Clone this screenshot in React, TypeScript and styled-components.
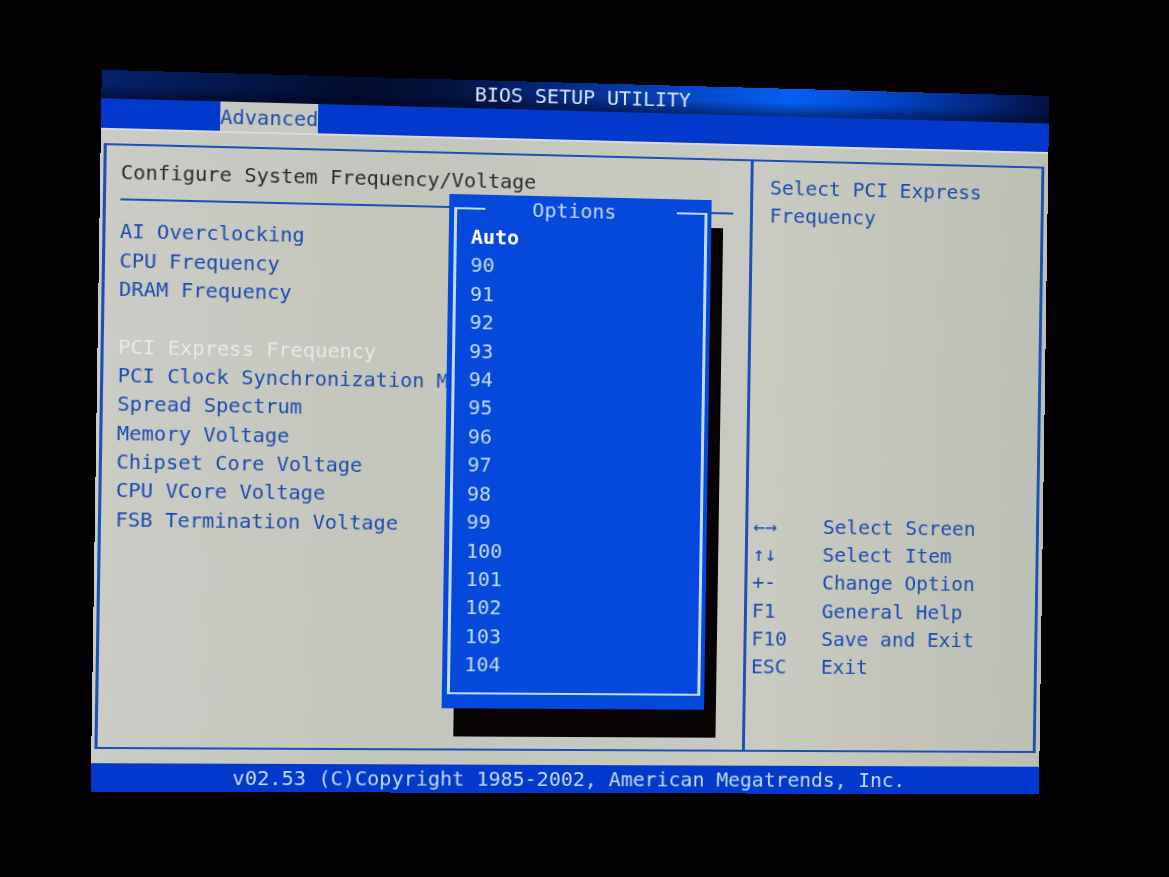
import React, { useState } from "react";
import styled, { createGlobalStyle } from "styled-components";

const ink = "#1c4cae";
const line = "#1d50b4";
const bar = "#0239cd";
const paper = "#c7c8c0";
const pale = "#c3dcf6";

const GlobalStyle = createGlobalStyle`
  * { box-sizing: border-box; }
  body {
    margin: 0;
    background: #030103;
    font-family: "DejaVu Sans Mono", "Liberation Mono", monospace;
    font-size: 20px;
    line-height: 28px;
  }
  button { font: inherit; color: inherit; background: none; border: 0; padding: 0; text-align: left; cursor: pointer; }
  h1, h2, p, ul, dl, dd, dt { margin: 0; padding: 0; font: inherit; list-style: none; }
`;

const Room = styled.div`
  min-height: 100vh;
  padding: 83px 116px 84px 103px;
  overflow: hidden;
`;

/* The monitor stands slightly turned away from the viewer. */
const Screen = styled.div`
  min-height: 710px;
  display: grid;
  grid-template-rows: 1fr 1fr 22fr 1fr;
  transform: perspective(2000px) rotateY(4deg) rotate(0.87deg);
`;

const TitleBar = styled.header`
  color: #d9e6fb;
  text-align: center;
  background:
    linear-gradient(180deg, rgba(0, 0, 0, 0) 50%, rgba(0, 2, 20, 0.5) 100%),
    linear-gradient(90deg, #04226c 0%, #031748 14%, #020d30 26%, #03133f 36%, #06267c 46%, #0545c0 60%, #0560f2 72%, #0346cc 82%, #04267e 93%, #04123c 100%);
`;

const MenuBar = styled.nav`
  display: flex;
  padding-left: 116px;
  background: ${bar};
`;

const MenuTab = styled.button`
  color: ${ink};
  background: ${paper};
`;

const Desk = styled.main`
  position: relative;
  display: grid;
  padding: 13px 4px 14px 3px;
  background: linear-gradient(90deg, #cbccc5 0%, #c4c6bd 30%, #c9cac1 70%, #bcbfb4 100%);
  border-top: 2px solid #d9dade;
`;

const Frame = styled.div`
  display: grid;
  grid-template-columns: 643fr 300fr;
  border: solid ${line};
  border-width: 2px 3px;
`;

const Settings = styled.section`
  padding: 12px 17px 0 14px;
  color: ${ink};
`;

const Heading = styled.h1`
  height: 42px;
  color: #2b2b2e;
  border-bottom: 2px solid ${line};
`;

const SettingList = styled.ul`
  display: grid;
  grid-template-rows: repeat(11, 1fr);
  height: 312px;
  margin-top: 16px;
`;

const SettingItem = styled.li<{ $gap?: boolean }>`
  grid-row: ${(p) => (p.$gap ? "span 2" : "auto")};
  align-self: end;
`;

const SettingButton = styled.button<{ $active?: boolean }>`
  display: block;
  white-space: nowrap;
  color: ${(p) => (p.$active ? "#e9e8e2" : "inherit")};
`;

const Help = styled.aside`
  display: flex;
  flex-direction: column;
  justify-content: space-between;
  padding: 12px 0 69px;
  color: ${ink};
  border-left: 3px solid ${line};
`;

const HelpText = styled.p`
  padding-left: 17px;
`;

const KeyList = styled.dl`
  display: grid;
  grid-template-columns: 71px 1fr;
  grid-auto-rows: 1fr;
  height: 170px;
  padding-left: 5px;
`;

const Popup = styled.section`
  position: absolute;
  left: 343px;
  top: 55px;
  width: 263px;
  height: 512px;
  padding: 0 4px 14px 5px;
  background: #0449dc;
  box-shadow: 12px 28px 0 #060302;
`;

const OptionFrame = styled.fieldset`
  height: 498px;
  min-width: 0;
  margin: 0;
  padding: 0 0 13px;
  border: solid ${pale};
  border-width: 2px 3px;
`;

const OptionTitle = styled.legend`
  width: 192px;
  margin: 0 auto;
  padding: 0 14px 0 0;
  text-align: center;
  color: ${pale};
`;

const OptionList = styled.ul`
  display: grid;
  grid-auto-rows: 1fr;
  height: 455px;
  margin-left: 14px;
`;

const OptionButton = styled.button<{ $chosen: boolean }>`
  display: block;
  width: 100%;
  color: ${(p) => (p.$chosen ? "#ffffff" : pale)};
  font-weight: ${(p) => (p.$chosen ? 700 : 400)};
`;

const Footer = styled.footer`
  color: ${pale};
  text-align: center;
  white-space: nowrap;
  background: ${bar};
`;

const settings = [
  "AI Overclocking",
  "CPU Frequency",
  "DRAM Frequency",
  "PCI Express Frequency",
  "PCI Clock Synchronization M",
  "Spread Spectrum",
  "Memory Voltage",
  "Chipset Core Voltage",
  "CPU VCore Voltage",
  "FSB Termination Voltage",
];

const keys = [
  ["←→", "Select Screen"],
  ["↑↓", "Select Item"],
  ["+-", "Change Option"],
  ["F1", "General Help"],
  ["F10", "Save and Exit"],
  ["ESC", "Exit"],
];

const options = ["Auto", ...Array.from({ length: 15 }, (_, i) => String(90 + i))];

export default function App() {
  const [chosen, setChosen] = useState("Auto");
  return (
    <Room>
      <GlobalStyle />
      <Screen>
        <TitleBar>BIOS SETUP UTILITY</TitleBar>
        <MenuBar>
          <MenuTab type="button">Advanced</MenuTab>
        </MenuBar>
        <Desk>
          <Frame>
            <Settings>
              <Heading>Configure System Frequency/Voltage</Heading>
              <SettingList>
                {settings.map((name) => {
                  const active = name === "PCI Express Frequency";
                  return (
                    <SettingItem key={name} $gap={active}>
                      <SettingButton type="button" $active={active}>{name}</SettingButton>
                    </SettingItem>
                  );
                })}
              </SettingList>
            </Settings>
            <Help>
              <HelpText>
                Select PCI Express
                <br />
                Frequency
              </HelpText>
              <KeyList>
                {keys.map(([key, action]) => (
                  <React.Fragment key={key}>
                    <dt>{key}</dt>
                    <dd>{action}</dd>
                  </React.Fragment>
                ))}
              </KeyList>
            </Help>
          </Frame>
          <Popup>
            <OptionFrame>
              <OptionTitle>Options</OptionTitle>
              <OptionList>
                {options.map((value) => (
                  <li key={value}>
                    <OptionButton type="button" $chosen={value === chosen} onClick={() => setChosen(value)}>
                      {value}
                    </OptionButton>
                  </li>
                ))}
              </OptionList>
            </OptionFrame>
          </Popup>
        </Desk>
        <Footer>v02.53 (C)Copyright 1985-2002, American Megatrends, Inc.</Footer>
      </Screen>
    </Room>
  );
}
